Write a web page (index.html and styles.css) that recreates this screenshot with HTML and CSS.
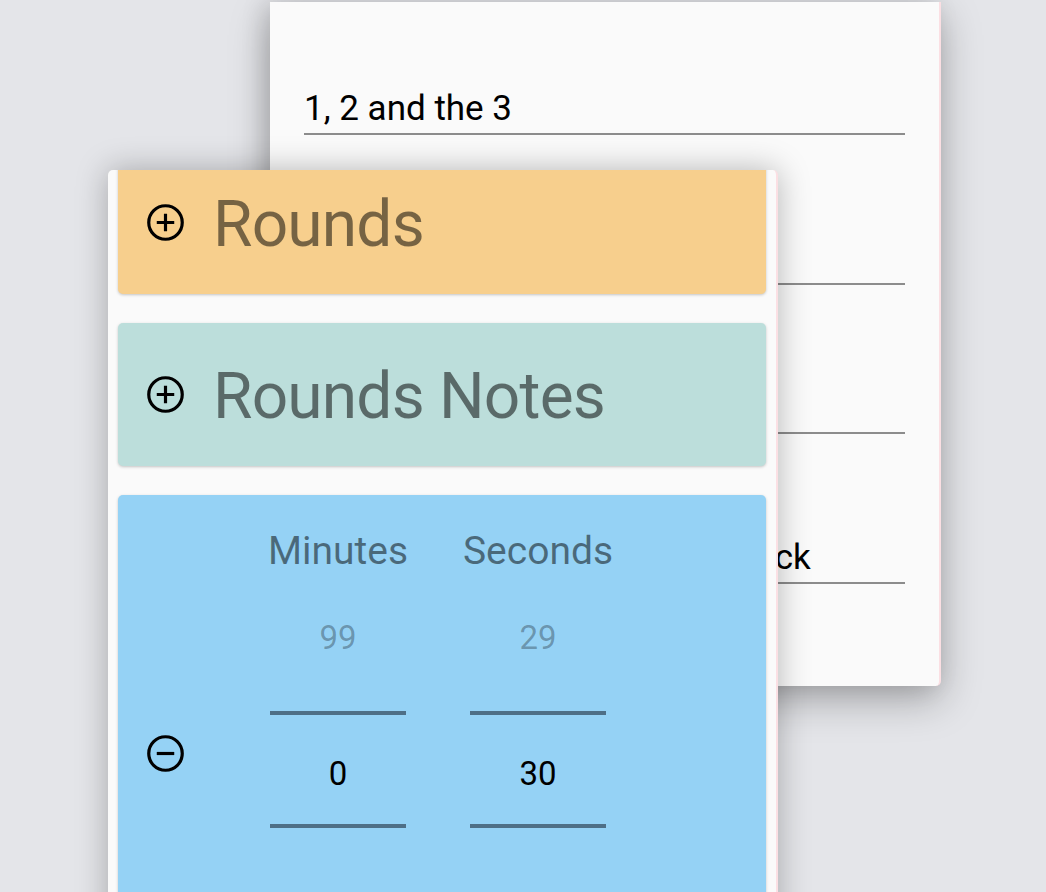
FILE: index.html
```html
<!DOCTYPE html>
<html lang="en">
<head>
<meta charset="utf-8">
<title>Rounds</title>
<link rel="stylesheet" href="styles.css">
</head>
<body>
<div class="stage">
  <div class="back-card">
    <div class="field"><span class="field-text">1, 2 and the 3</span></div>
    <div class="field"><span class="field-text"></span></div>
    <div class="field"><span class="field-text"></span></div>
    <div class="field"><span class="field-text">Rest between round on the clock</span></div>
  </div>

  <div class="front-panel">
    <div class="card-list">
      <div class="card card-orange">
        <svg class="toggle" viewBox="0 0 36 36" aria-hidden="true"><circle cx="18" cy="18" r="16.3"/><path d="M9.5 18H26.5M18 9.5V26.5"/></svg>
        <span class="card-title">Rounds</span>
      </div>
      <div class="card card-teal">
        <svg class="toggle" viewBox="0 0 36 36" aria-hidden="true"><circle cx="18" cy="18" r="16.3"/><path d="M9.5 18H26.5M18 9.5V26.5"/></svg>
        <span class="card-title">Rounds Notes</span>
      </div>
      <div class="card card-blue">
        <svg class="toggle" viewBox="0 0 36 36" aria-hidden="true"><circle cx="18" cy="18" r="16.3"/><path d="M9.5 18H26.5"/></svg>
        <div class="pickers">
          <div class="picker">
            <div class="picker-label">Minutes</div>
            <div class="picker-prev">99</div>
            <div class="picker-line"></div>
            <div class="picker-value">0</div>
            <div class="picker-line picker-line-end"></div>
          </div>
          <div class="picker">
            <div class="picker-label">Seconds</div>
            <div class="picker-prev">29</div>
            <div class="picker-line"></div>
            <div class="picker-value">30</div>
            <div class="picker-line picker-line-end"></div>
          </div>
        </div>
      </div>
    </div>
  </div>
</div>
</body>
</html>
```

FILE: styles.css
```css
* { box-sizing: border-box; }

html, body {
  margin: 0;
  padding: 0;
  width: 1046px;
  height: 892px;
  overflow: hidden;
  background: #e4e5e9;
  font-family: Roboto, "Liberation Sans", sans-serif;
}

.stage {
  position: relative;
  width: 1046px;
  height: 892px;
  overflow: hidden;
}

/* back window */
.back-card {
  position: absolute;
  left: 270px;
  top: 2px;
  width: 671px;
  height: 684px;
  background: #fafafa;
  border-right: 2px solid #fbdfe3;
  border-radius: 0 0 5px 0;
  box-shadow: 0 14px 40px rgba(0, 0, 0, 0.28), -6px 0 24px rgba(0, 0, 0, 0.12);
  padding: 0 34px;
  display: flex;
  flex-direction: column;
}

.field {
  height: 149.5px;
  border-bottom: 2px solid #8c8c8c;
  display: flex;
  align-items: flex-end;
  padding-bottom: 3px;
  overflow: hidden;
  white-space: nowrap;
}

.field:first-child { height: 133px; }

.field-text {
  font-size: 35px;
  line-height: 42px;
  color: #000;
}

/* front window */
.front-panel {
  position: absolute;
  left: 108px;
  top: 170px;
  width: 670px;
  height: 760px;
  background: #fafafa;
  border-right: 2px solid #fbdfe3;
  border-radius: 5px 5px 0 0;
  box-shadow: 0 0 32px rgba(0, 0, 0, 0.28);
  overflow: hidden;
  padding: 0 10px;
}

.card-list {
  margin-top: -19px;
  display: flex;
  flex-direction: column;
  gap: 29px;
}

.card {
  border-radius: 5px;
  box-shadow: 0 1px 3px rgba(0, 0, 0, 0.22);
  display: flex;
  align-items: center;
  padding-left: 29px;
}

.card-orange { background: #f7cf8d; height: 143px; }
.card-teal { background: #bcdedb; height: 143px; }
.card-blue { background: #95d2f5; height: 516px; align-items: flex-start; }

.toggle {
  width: 37px;
  height: 37px;
  flex: none;
  fill: none;
  stroke: #000;
  stroke-width: 3.1;
}

.card-blue .toggle { margin-top: 240px; }

.card-title {
  margin-left: 29px;
  font-size: 64px;
  line-height: 76px;
  color: rgba(0, 0, 0, 0.52);
  letter-spacing: -0.8px;
  white-space: nowrap;
  margin-top: 5px;
}

/* time pickers */
.pickers {
  margin-left: 86px;
  display: flex;
  gap: 64px;
  padding-top: 31px;
}

.picker {
  width: 136px;
  display: flex;
  flex-direction: column;
  align-items: stretch;
  text-align: center;
}

.picker-label {
  font-size: 39px;
  line-height: 50px;
  color: rgba(0, 0, 0, 0.5);
  white-space: nowrap;
  margin-left: -20px;
  margin-right: -20px;
}

.picker-prev {
  margin-top: 42px;
  font-size: 33px;
  line-height: 40px;
  color: rgba(0, 0, 0, 0.3);
}

.picker-line {
  height: 4px;
  background: #4e6f86;
  margin-top: 53px;
}

.picker-value {
  margin-top: 39px;
  font-size: 33px;
  line-height: 40px;
  color: #000;
}

.picker-line-end { margin-top: 30px; }
```
